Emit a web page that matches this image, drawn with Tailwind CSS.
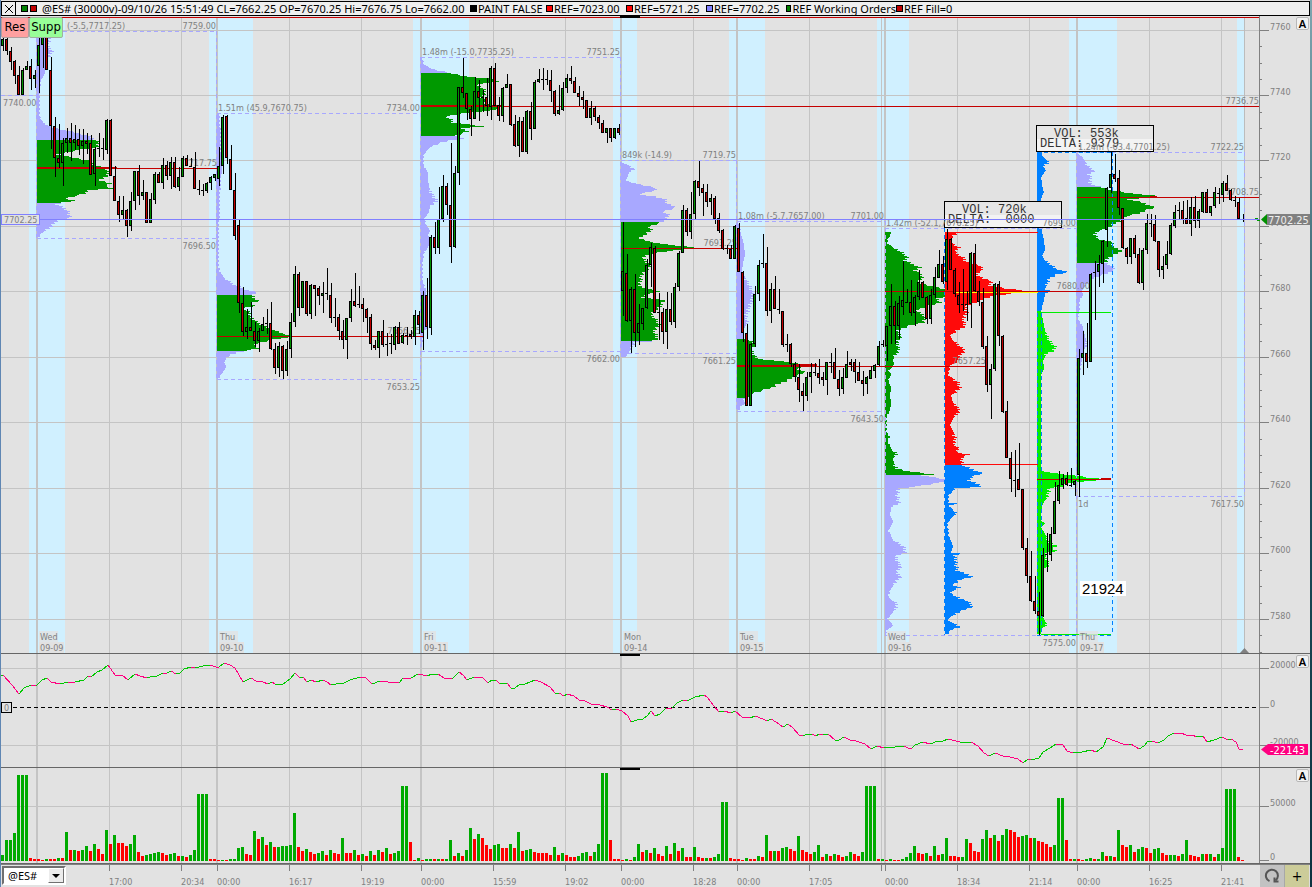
<!DOCTYPE html>
<html lang="en">
<head>
<meta charset="utf-8">
<title>@ES# chart</title>
<script src="https://cdn.jsdelivr.net/npm/@tailwindcss/browser@4"></script>
</head>
<body class="h-screen overflow-hidden bg-[#e2e2e2] font-['DejaVu_Sans_Condensed','Noto_Sans',sans-serif]">
<div class="flex h-full w-full border-l border-[#5f86b3]">
<div class="grid h-full min-w-0 flex-1 grid-rows-[16px_638fr_114fr_96fr_23px]">
  <header class="mt-px flex items-center overflow-hidden whitespace-nowrap border border-black bg-[#efefef] font-['Noto_Sans',sans-serif] text-[11px] leading-3 text-black">
    <button aria-label="Close" class="flex h-full w-[14px] items-center justify-center border-r border-black">
      <svg class="size-2" viewBox="0 0 8 8"><path d="M0 0L8 8M8 0L0 8" stroke="#000" fill="none"/></svg>
    </button>
    <span class="ml-[5px] size-[7px] border border-black bg-[#008000]"></span>
    <span class="ml-[2px] size-[7px] border border-black bg-[#c00000]"></span>
    <span class="ml-[5px] w-[428px]">@ES# (30000v)-09/10/26 15:51:49 CL=7662.25 OP=7670.25 Hi=7676.75 Lo=7662.00</span>
    <span class="flex w-[76px] items-center"><i class="mr-px size-[7px] border border-black bg-black"></i>PAINT FALSE</span>
    <span class="flex w-[80px] items-center"><i class="mr-px size-[7px] border border-black bg-[#f00]"></i>REF=7023.00</span>
    <span class="flex w-[80px] items-center"><i class="mr-px size-[7px] border border-black bg-[#f00]"></i>REF=5721.25</span>
    <span class="flex w-[80px] items-center"><i class="mr-px size-[7px] border border-black bg-[#8080ff]"></i>REF=7702.25</span>
    <span class="flex w-[110px] items-center"><i class="mr-px size-[7px] border border-black bg-[#008000]"></i>REF Working Orders</span>
    <span class="flex items-center"><i class="mr-px size-[7px] border border-black bg-[#c00000]"></i>REF Fill=0</span>
  </header>

  <section class="relative min-h-0 overflow-hidden" aria-label="Price">
    <svg id="price" class="block h-full w-full" viewBox="1 16 1309 638" preserveAspectRatio="xMinYMin meet"></svg>
    <div class="absolute left-0 top-px flex text-[13px] leading-[18px] text-black">
      <button class="h-[21px] w-7 rounded-xs border border-[#b0a0a0] bg-[#ffa0a0] pb-0.5">Res</button>
      <button class="h-[21px] w-[34px] rounded-xs border border-[#a0b0a0] bg-[#98ff98] pb-0.5">Supp</button>
    </div>
    <button class="absolute right-px top-px h-[13px] w-[13px] rounded-xs border border-[#b8b8b8] bg-[#f2f2f2] font-['Noto_Sans',sans-serif] text-[11px] font-semibold leading-[10px]">A</button>
  </section>

  <section class="relative min-h-0 overflow-hidden" aria-label="Delta">
    <svg id="delta" class="block h-full w-full" viewBox="1 654 1309 114" preserveAspectRatio="xMinYMin meet"></svg>
    <button class="absolute right-px top-px h-[13px] w-[13px] rounded-xs border border-[#b8b8b8] bg-[#f2f2f2] font-['Noto_Sans',sans-serif] text-[11px] font-semibold leading-[10px]">A</button>
  </section>

  <section class="relative min-h-0 overflow-hidden" aria-label="Volume">
    <svg id="volume" class="block h-full w-full" viewBox="1 768 1309 96" preserveAspectRatio="xMinYMin meet"></svg>
    <button class="absolute right-px top-px h-[13px] w-[13px] rounded-xs border border-[#b8b8b8] bg-[#f2f2f2] font-['Noto_Sans',sans-serif] text-[11px] font-semibold leading-[10px]">A</button>
  </section>

  <footer class="relative flex min-h-0 border-t border-[#808080]">
    <svg id="times" class="block h-full min-w-0 flex-1" viewBox="1 865 1258 22" preserveAspectRatio="xMinYMin meet"></svg>
    <div class="absolute left-px top-px flex h-[19px] w-16 border-2 border-t-[#707070] border-l-[#707070] border-r-white border-b-white bg-white">
      <label class="sr-only" for="sym">Symbol</label>
      <select id="sym" class="w-full appearance-none bg-white pl-1 font-['Noto_Sans',sans-serif] text-[11px] leading-[15px] text-black outline-none"><option>@ES#</option></select>
      <span class="pointer-events-none absolute right-0 top-0 flex h-full w-4 items-center justify-center border border-t-white border-l-white border-r-[#707070] border-b-[#707070] bg-[#ececec]">
        <svg class="h-1 w-2" viewBox="0 0 8 4"><path d="M0 0H8L4 4Z"/></svg>
      </span>
    </div>
    <button aria-label="Refresh" class="flex w-[25px] items-center justify-center border-r border-[#a8a8a8] bg-[#c2c2c2]">
      <svg class="size-4" viewBox="0 0 16 16" fill="none" stroke="#555" stroke-width="2"><path d="M5.500 13.200A6 6 0 1 1 11.500 12.500"/><path d="M14.500 13.500H10.500V9.500" /></svg>
    </button>
    <button aria-label="Add" class="w-[25px] border-r border-[#ddd] bg-[#cccc99] text-sm leading-5 text-black">+</button>
  </footer>
</div>
<div class="w-[2px] bg-linear-to-b from-[#7fa6b0] via-[#1f4f5c] to-[#0d3340]"></div>
</div>

<script>
const LAV = '#a8a8ff', GRN = '#009900', BLU = '#0080ff', RED = '#ff0a0a', LIM = '#00ee00', DRED = '#c40000', GRID = '#c4c4c4', GRAY = '#808080';
const R = (x, y, w, h, f) => `<rect x="${x}" y="${y}" width="${w}" height="${h}" fill="${f}" shape-rendering="crispEdges"/>`;
const T = (x, y, s, a) => `<text x="${x}" y="${y}" fill="#808080" font-size="9" ${a || ''}>${s}</text>`;
const H = (y, x1, x2, c, d) => `<path d="M${x1} ${y + .5}H${x2}" stroke="${c}" ${d ? 'stroke-dasharray="' + d + '"' : ''} shape-rendering="crispEdges"/>`;
const V = (x, y1, y2, c, d) => `<path d="M${x + .5} ${y1}V${y2}" stroke="${c}" ${d ? 'stroke-dasharray="' + d + '"' : ''} shape-rendering="crispEdges"/>`;

// One entry per bar: high, body top, body bottom, low (pixels); leading g/r/d is up, down or doji.
const candles = `
g36,39,45,51 r36,39,50,55 r47,51,61,70 r60,61,75,84 r66,75,94,95 g68,70,94,95 g61,66,69,70 r59,66,78,90 g70,75,78,88 g38,45,65,93
g36,36,44,68 r36,36,69,70 r57,70,125,149 r117,126,157,177 r124,158,162,168 g138,143,162,186 g128,138,142,153 r123,138,142,161 g125,139,142,150 r129,139,145,155
g129,141,145,164 r133,141,143,154 r135,143,174,175 g147,149,173,186 d133,148,148,157 d138,148,148,160 g119,120,149,154 r119,120,175,176 r166,176,200,201 r196,201,214,222
g196,210,214,219 r209,210,225,237 g192,201,225,231 g171,171,200,210 r165,171,195,205 g180,192,195,200 r192,192,222,223 g193,199,222,223 g172,174,199,204 r172,174,182,183
g158,165,182,189 r161,165,175,180 g157,162,175,189 r157,162,186,188 g167,177,186,191 g156,158,176,177 r155,158,165,166 d158,166,166,167 r152,167,188,189 d180,189,189,195
d184,190,190,196 g182,183,190,193 g176,177,182,190 g174,174,177,181 g147,166,178,186 g115,117,165,174 r115,116,157,164 r145,159,189,190 r173,190,235,240 r220,225,302,313
r287,303,331,336 g309,327,331,339 r302,327,330,331 r322,331,340,347 g328,331,340,352 g317,324,330,331 d309,323,323,334 r302,323,348,350 r343,349,367,374 g342,346,367,377
r345,346,370,379 g341,349,370,376 g313,322,348,358 g266,274,321,327 r272,274,307,316 g281,281,307,308 r281,281,313,316 g284,285,313,319 r285,285,288,316 r286,288,295,305
g282,293,295,313 d268,293,294,300 r283,295,317,323 d298,317,318,327 r314,317,330,340 r320,331,339,349 g318,318,339,359 g289,301,317,322 r273,301,305,307 d286,304,305,308
r298,304,308,322 r308,309,317,333 r314,317,343,350 r340,345,347,350 g331,331,347,358 r320,331,344,347 d333,344,344,356 d334,343,344,354 g326,327,344,350 r322,327,343,344
g333,335,342,344 d327,335,336,345 r330,334,336,339 g310,315,336,345 r311,315,324,334 g291,295,332,350 r278,295,326,339 g235,237,327,335 r222,237,247,254 g187,219,247,254
g175,186,218,222 r183,186,204,215 r143,205,246,263 g166,173,246,248 g87,87,172,185 r58,87,92,98 r93,93,108,120 r106,109,118,136 g77,91,118,119 r80,91,97,121
d90,97,98,112 r78,97,105,116 g66,68,106,120 r63,68,105,106 r97,105,115,121 g87,88,115,122 g74,84,87,88 r84,84,124,126 r115,124,145,147 g117,121,145,157
r117,121,151,152 g110,111,151,154 r102,111,128,140 g80,82,128,129 g69,79,81,83 d68,79,80,90 d70,79,80,85 r70,80,90,102 r90,91,113,116 g85,110,113,115
g82,88,109,111 g74,78,87,93 r66,78,80,84 r77,81,92,93 r86,93,96,106 r91,97,99,109 r100,100,117,118 g101,108,117,125 r106,108,116,121 r115,117,122,129
r120,123,132,133 g128,128,132,143 r128,128,137,142 g128,128,137,139 r124,128,132,135 g222,271,290,316 r254,273,320,322 g287,289,320,353 r274,289,332,347 g304,323,332,345
g308,308,323,330 g259,265,307,309 g243,247,264,287 r246,248,312,313 d293,312,313,340 r308,312,331,344 g292,309,331,349 r293,309,321,325 g283,287,321,328 g251,253,286,291
g205,210,252,253 r208,210,231,236 g192,214,231,239 g180,181,213,219 r161,181,187,196 r184,188,192,216 r184,192,201,207 g194,198,201,215 r196,198,218,224 r213,218,230,233
r229,230,248,250 d245,248,249,254 r245,249,258,259 g225,226,258,259 r223,228,271,272 r271,272,332,342 r324,333,405,406 g343,344,405,406 g286,294,343,347 g260,265,293,301
d234,263,264,268 r247,263,310,316 g283,289,310,323 r276,289,308,309 d289,309,310,314 r311,311,344,347 d334,344,345,352 r343,344,363,367 r362,364,376,382 r364,377,389,402
r383,391,395,411 g372,377,395,401 g363,372,376,393 d363,372,374,376 r359,373,377,384 r372,377,379,386 g362,362,379,395 d353,362,363,373 r348,362,378,379 r370,379,388,396
g368,377,388,394 g351,364,377,378 r359,362,364,371 r359,362,371,383 r362,372,380,381 r371,380,383,396 g376,377,383,394 g366,370,378,379 g364,365,370,378 g341,346,364,366
d340,344,345,347 g326,326,345,361 g284,306,325,344 r301,306,325,344 g296,303,325,339 g261,300,306,315 d289,302,303,303 r280,302,312,316 g295,297,312,326 g270,282,296,300
r281,282,297,298 r296,297,318,324 g289,295,318,324 g267,277,294,298 g250,264,277,278 r256,264,281,284 g229,239,281,290 r238,239,269,270 r268,270,293,297 r282,295,304,313
d269,304,305,311 d291,304,305,321 g252,253,303,328 r244,253,290,292 r281,291,301,306 r288,302,346,349 r336,346,384,392 g364,369,384,419 g283,284,368,371 r281,284,335,346
r335,336,411,413 r401,411,457,458 r452,458,478,492 d450,480,481,497 r443,479,489,490 r489,489,547,550 r538,548,575,583 r551,576,600,602 r576,601,610,614 r592,611,615,635
g548,555,615,617 d533,554,555,572 g527,534,554,561 g482,501,533,534 g471,485,500,504 g474,478,484,489 r472,478,484,486 d468,485,487,487 g480,481,484,496 g349,358,474,497
g331,353,357,375 r323,353,361,368 g273,274,361,362 d261,272,273,320 g255,264,271,287 g240,241,263,283 g187,188,229,247 g151,174,187,193 r154,174,178,182 r170,178,207,215
r208,208,247,249 r247,248,256,264 g238,238,256,264 r235,238,253,258 r248,254,282,284 g248,250,282,290 g214,223,249,254 d214,223,224,237 r215,224,240,242 r241,241,269,277
g256,266,269,279 g241,254,264,269 g223,225,253,255 g205,212,225,228 d202,210,211,220 r201,210,219,224 r200,218,223,224 g197,207,223,236 r196,207,220,228 g209,211,220,228
g192,192,211,213 r189,192,212,213 g206,206,212,216 g187,192,205,208 d188,193,194,204 g181,183,194,202 r175,183,190,191 r189,190,199,201 d196,200,201,207 r198,202,218,219
d214,219,220,222`.trim().split(/\s+/);

const volume = `
g6 g21 g21 g28 g86 g86 g86 r3 r2 r2 r1 g2 r2 r2 g3 r3 g29 r11 g11 r10 g11 g15 r10 g17 r12 r7 g31 r17 g26 r18
r18 r15 g17 g26 r9 r5 g6 g7 g8 g9 r8 r6 g7 g8 r5 g5 r4 g6 g11 g67 g67 g67 r2 r2 r1 g1 r1 g2 g2 g13
g14 r7 r6 g30 r22 g24 r16 g19 r14 g14 g15 g15 g16 g48 r14 r10 g12 r9 r7 g8 g10 r6 g11 r8 r7 g23 r8 r8 g11 r6
g7 r5 g10 r6 g11 r9 g13 r7 g8 g10 g75 g75 r19 r1 g3 r1 g2 g2 r2 g2 r2 g2 g21 r5 g8 r5 g11 g33 r22 g27
r23 r16 r12 g16 g17 r13 r13 g17 r13 g29 r10 g11 g12 r9 r8 r8 r8 r6 g14 r6 g8 r6 r4 r4 g5 g8 g9 r5 g9 g17
g88 g88 r21 r2 r2 r1 g2 r1 g4 g17 r9 g11 r8 g13 r7 r5 g15 r7 g18 r10 g13 r4 r4 g14 r4 r3 g3 r3 g4 g7
g59 g59 r3 r2 r2 r1 g3 r2 r2 g5 r4 g26 r10 g10 r10 g13 g14 r12 r10 g25 r11 r9 r7 g9 g16 r4 g7 r5 g7 r6
r4 g5 g9 r7 r5 g9 g75 g75 g75 r2 g2 r1 g2 r1 r1 g2 g4 g8 g15 r8 r7 g8 r5 g15 r6 g7 g23 r5 r5 r4
g4 g22 r18 r10 r9 g22 g31 r23 g26 r20 g26 g32 r31 r29 r24 g25 g26 r23 g23 r20 r19 r17 r14 g16 g63 g63 r21 r2 g2 r2
r1 g2 g3 r2 g2 g9 r5 g5 r4 g31 r16 r14 g16 r9 g12 g14 r13 r8 g12 g13 r8 r6 g6 g6 r5 g7 g21 r6 r5 r4
g7 r7 g7 r4 g7 g13 g72 g72 g72 r4 r1`.trim().split(/\s+/);

// Volume profiles: base x, colour bands [until y, colour], then y:width breakpoints.
const profiles = [
  [37, [[140, LAV], [203, GRN], [999, LAV]], '38:13 45:10 50:15 55:13 60:8 65:8 72:8 80:4 93:3 115:3 122:6 127:15 131:34 135:50 139:58 142:62 147:60 150:38 154:20 157:35 160:52 165:58 168:70 175:71 180:62 183:74 186:68 188:76 190:50 193:48 198:28 200:38 202:25 204:20 208:28 212:32 217:33 220:20 228:12 233:4 237:3'],
  [217, [[295, LAV], [351, GRN], [999, LAV]], '114:3 165:5 172:5 178:4 200:3 236:2 265:2 271:3 277:7 283:15 289:28 292:40 295:35 298:37 300:42 303:33 305:38 308:25 312:33 316:33 320:38 325:45 330:58 333:65 336:80 339:55 343:40 346:37 348:42 350:30 352:20 356:10 362:7 366:9 370:7 375:4 379:1'],
  [421, [[73, LAV], [136, GRN], [999, LAV]], '58:2 64:3 69:12 72:28 73:30 76:45 78:68 81:77 84:55 88:62 92:65 97:60 100:68 103:62 106:82 110:70 113:40 116:25 119:30 122:32 126:62 128:40 131:47 135:35 138:43 140:28 143:18 146:10 150:6 155:3 165:3 172:7 180:7 186:8 192:10 198:14 201:16 205:9 212:8 217:4 224:5 230:9 234:7 241:9 247:7 253:3 265:2 280:2 289:5 320:6 328:6 331:3 340:2 347:1'],
  [621, [[222, LAV], [341, GRN], [999, LAV]], '162:2 168:13 172:8 180:5 184:18 187:34 190:34 194:17 196:34 199:44 203:46 207:55 211:42 215:48 220:44 222:40 226:28 230:30 234:24 238:18 241:28 244:45 247:75 249:60 252:38 255:25 258:22 261:25 265:30 270:25 275:20 280:20 285:18 288:25 291:38 294:25 297:22 300:45 303:40 306:40 310:33 314:30 320:36 325:38 330:33 335:35 338:37 341:30 342:14 348:10 353:7 357:4'],
  [737, [[339, LAV], [398, GRN], [999, LAV]], '222:2 236:5 245:7 255:8 262:6 270:5 281:10 288:14 293:16 300:15 307:12 315:9 322:10 330:6 338:6 340:12 344:20 348:14 352:15 358:20 361:45 365:75 368:60 372:68 375:60 380:50 384:40 387:35 390:25 393:15 397:10 399:6 403:8 406:4 410:2'],
  [885, [[475, GRN], [999, LAV]], '232:6 235:5 239:3 243:3 247:8 250:14 253:18 256:22 260:20 263:26 267:35 270:30 274:36 278:37 282:32 286:48 289:60 291:82 296:60 298:52 302:55 306:42 310:30 314:38 318:40 322:38 325:25 330:12 336:16 342:12 350:14 356:9 360:8 364:9 370:4 374:6 380:4 388:6 395:5 403:6 410:5 416:2 425:2 432:2 436:5 440:3 450:7 454:12 458:8 463:9 468:11 471:25 474:48 475:38 478:55 480:67 482:52 484:45 486:30 488:14 495:12 503:14 507:6 515:5 521:8 530:4 540:8 546:19 552:20 556:10 562:13 566:16 572:11 576:16 582:10 590:5 597:4 604:12 610:9 618:3 625:8 630:2 634:1'],
  [945, [[465, RED], [999, BLU]], '232:13 236:8 242:6 247:14 252:10 257:18 262:22 265:35 270:38 273:30 278:38 280:46 285:45 288:60 290:79 293:67 296:45 300:35 306:20 312:22 318:18 326:20 330:12 335:5 340:8 345:14 350:20 355:15 360:14 365:5 375:4 382:13 388:15 395:6 402:8 410:15 418:8 425:5 430:8 437:10 445:9 448:14 452:11 454:24 457:17 464:17 466:20 470:30 473:38 476:27 480:24 485:36 486:36 488:10 495:4 502:4 503:13 505:4 513:11 518:6 523:3 535:4 546:8 552:6 553:16 555:10 563:11 570:12 576:28 579:16 584:8 587:14 592:5 598:14 600:22 606:28 611:15 616:6 620:3 626:15 630:5 634:3'],
  [1037, [[311, BLU], [999, LIM]], '153:4 156:6 160:10 163:11 166:6 170:9 176:4 182:4 192:7 196:4 205:4 228:4 240:7 250:8 255:5 260:8 265:15 268:18 270:25 272:30 274:20 278:12 284:10 288:8 291:15 293:8 300:7 308:4 311:4 320:6 330:8 340:12 346:18 350:17 353:10 360:6 368:7 375:4 440:4 470:4 471:7 473:20 475:38 477:50 479:72 481:45 483:30 486:24 488:12 495:11 503:6 510:4 520:4 523:8 527:4 535:9 542:12 545:20 548:15 550:20 553:8 560:10 565:12 570:4 608:6 612:4 625:10 628:4 634:4'],
  [1077, [[187, LAV], [263, GRN], [999, LAV]], '154:3 160:8 165:10 170:17 174:12 178:14 182:12 185:18 187:25 190:35 193:55 195:78 197:70 199:52 202:65 207:78 210:68 213:62 216:48 219:45 223:38 228:30 231:20 234:18 238:20 242:36 246:35 250:45 253:40 257:32 262:28 266:35 269:38 273:30 277:18 280:12 290:5 295:6 300:3 310:3 318:1 324:5 335:8 345:10 350:6 360:5 368:4 375:1']
];

const thick = [36, 216, 420, 620, 736, 884, 1076];
const thin = [109, 181, 289, 361, 493, 565, 693, 809, 881, 957, 1029, 1149, 1221];
const grid = (y1, y2) => thin.map(x => V(x, y1, y2, GRID)).join('') + thick.map(x => R(x, y1, 2, y2 - y1, GRID)).join('');
const axis = (y1, y2) => V(1259, y1, y2, GRAY);
const END = 'text-anchor="end"';

function price() {
  let s = [[29, 36], [209, 44], [413, 56], [613, 24], [729, 36], [877, 32], [1069, 48], [1237, 8]].map(a => R(a[0], 18, a[1], 635, '#d0f0ff')).join('');
  s += [30, 95, 160, 226, 291, 357, 422, 488, 553, 619].map((y, i) => H(y, 1, 1259, GRID) + H(y, 1259, 1269, GRAY) + T(1270, y, 7760 - 20 * i)).join('');
  s += grid(18, 653) + V(1244, 18, 653, '#bcbcbc');
  for (let i = 0; i < 39; i++) if (i % 4) s += H(Math.round(30 + i * 16.36), 1259, 1262, GRAY);
  s += axis(16, 653) + H(653, 1, 1310, '#666');
  for (const [x, bands, pts] of profiles) {
    const p = pts.split(' ').map(q => q.split(':').map(Number));
    for (let i = 0; i < p.length - 1; i++) {
      for (let y = p[i][0]; y < p[i + 1][0]; y++) {
        const w0 = p[i][1] + (p[i + 1][1] - p[i][1]) * (y - p[i][0]) / (p[i + 1][0] - p[i][0]);
        const j = w0 > 9 ? ((y * 7 + x) % 5) - 2 : (w0 < 5 && x !== 1037 && y % 4 > 1 ? -1 : 0);
        s += R(x, y, Math.max(1, Math.round(w0 + j)), 1, bands.find(b => y < b[0])[1]);
      }
    }
  }
  const D = '4 3';
  s += [[31, 63, 217], [238, 37, 217], [95, 1, 37], [113, 217, 421], [379, 217, 421], [57, 421, 620], [351, 421, 620], [160, 621, 737], [353, 621, 737], [221, 737, 885], [411, 737, 882], [228, 885, 1077], [635, 885, 1039], [152, 1077, 1244], [496, 1077, 1244]].map(a => H(a[0], a[1], a[2], LAV, D)).join('');
  s += [[36, 31, 238], [216, 31, 379], [420, 57, 379], [620, 57, 353], [736, 160, 411], [885, 221, 635], [1076, 152, 635], [1244, 152, 496]].map(a => V(a[0], a[1], a[2], LAV, D)).join('');
  s += V(944, 228, 635, BLU, D) + V(1037, 152, 635, BLU, D) + V(1041, 152, 635, BLU, D) + V(1112, 152, 635, BLU, D) + H(152, 1037, 1112, BLU, D) + H(635, 1037, 1112, BLU, D);
  // value and reference lines
  s += [[17, 1, 1259], [106, 421, 1259], [168, 37, 217], [336, 217, 423], [248, 621, 737], [366, 737, 985], [291, 885, 1090], [197, 1077, 1259], [479, 1037, 1111]].map(a => H(a[0], a[1], a[2], DRED)).join('');
  s += R(37, 167, 80, 1, DRED) + R(421, 105, 80, 1, DRED) + R(737, 365, 80, 1, DRED) + R(794, 364, 23, 1, DRED) + R(1101, 478, 10, 1, DRED) + R(1150, 196, 7, 1, DRED);
  s += R(945, 232, 93, 1, RED) + R(945, 464, 93, 1, RED) + R(956, 292, 82, 1, '#ffff00') + R(1040, 312, 71, 1, LIM) + R(1041, 634, 70, 1, LIM);
  s += [[216, 29, '7759.00'], [217, 166, '7717.75'], [216, 249, '7696.50'], [420, 111, '7734.00'], [620, 55, '7751.25'], [421, 334, '7666.25'], [420, 390, '7653.25'], [620, 362, '7662.00'], [736, 158, '7719.75'], [737, 246, '7693.25'], [736, 364, '7661.25'], [884, 219, '7701.00'], [884, 422, '7643.50'], [986, 364, '7657.25'], [1090, 289, '7680.00'], [1259, 104, '7736.75'], [1259, 195, '7708.75'], [1244, 150, '7722.25'], [1244, 507, '7617.50'], [1076, 646, '7575.00']].map(a => T(a[0], a[1], a[2], END)).join('');
  s += T(67, 29, '(-5.5,7717.25)') + T(3, 106, '7740.00') + T(218, 111, '1.51m (45.9,7670.75)') + T(422, 55, '1.48m (-15.0,7735.25)') + T(622, 158, '849k (-14.9)') + T(738, 219, '1.08m (-5.7,7657.00)') + T(1078, 507, '1d');
  s += [[38, 'Wed', '09-09'], [218, 'Thu', '09-10'], [422, 'Fri', '09-11'], [622, 'Mon', '09-14'], [738, 'Tue', '09-15'], [886, 'Wed', '09-16'], [1078, 'Thu', '09-17']].map(a => R(a[0] + 1, 631, a[1] === 'Fri' ? 13 : 19, 11, '#e2e2e2cc') + R(a[0] + 1, 642, 25, 11, '#e2e2e2') + T(a[0] + 2, 640, a[1]) + T(a[0] + 2, 651, a[2])).join('');
  candles.forEach((c, k) => {
    const [h, t, b, l] = c.slice(1).split(',').map(Number), x = 4 * k + 1;
    s += R(x + 2, h, 1, Math.max(1, l - h), '#000');
    if (c[0] === 'd') s += R(x, t, 3, 1, '#000');
    else s += R(x, t, 3, b - t + 1, '#000') + R(x + 1, t + 1, 1, Math.max(0, b - t - 1), c[0] === 'g' ? '#009000' : '#c00000');
  });
  // info boxes
  const box = (x, y, a, b) => R(x, y, 118, 27, '#000') + R(x + 1, y + 1, 116, 25, '#e6e6e6') + R(x + 1, y + 14, 116, 12, '#f3f3f3') + `<g font-family="Liberation Mono, monospace" font-size="12" fill="#333"><text x="${x + 18}" y="${y + 12}">${a}</text><text x="${x + 4}" y="${y + 22}">${b}</text></g>`;
  s += box(1036, 125, 'VOL: 553k', 'DELTA: 9379') + box(944, 201, 'VOL: 720k', 'DELTA:&#160; 0000');
  s += T(886, 226, '1.42m (-52.1,7678.25)') + T(1078, 150, '1.24m (-63.4,7701.25)') + T(1076, 226, '7699.00', END);
  s += H(219, 1, 1259, '#8080ff');
  s += `<rect x="1.5" y="214.500" width="38" height="10" fill="#e2e2e2" stroke="#8080ff"/>` + T(4, 223, '7702.25');
  s += R(1080, 581, 46, 15, '#fff') + '<text x="1082" y="594" font-family="Liberation Sans" font-size="15">21924</text>';
  s += '<path d="M1240 653L1244.500 648L1249 653Z" fill="#808080"/>' + R(620, 16, 20, 2, '#000');
  s += `<path d="M1261 219.500L1267 214V225Z" fill="#009000"/>` + R(1255, 218, 3, 1, GRN) + R(1257, 220, 3, 1, GRN) + R(1267, 214, 43, 11, '#808080') + '<text x="1268" y="224" font-size="11" fill="#eee">7702.25</text>';
  return s;
}

const deltaPts = '1,676 3,675 12,685 19,694 24,688 31,685 36,686 42,680 47,678 51,682 60,684 68,682 75,682 84,680 88,676 91,677 97,672 102,670 108,665 115,675 122,675 128,680 135,674 140,676 147,678 150,677 157,676 163,673 167,673 171,671 176,674 180,673 184,669 191,667 195,668 203,666 210,665 216,667 219,667 224,663 230,665 235,668 243,682 251,678 256,681 263,682 268,684 272,682 275,684 283,684 290,679 295,673 300,678 303,677 307,682 311,680 316,682 323,680 327,682 331,685 336,684 344,683 350,680 360,677 366,678 372,684 380,681 388,682 399,683 403,678 411,678 418,674 423,675 427,676 432,674 438,674 444,678 452,679 459,672 463,675 467,680 474,677 482,677 488,683 492,680 496,680 500,684 507,683 511,688 515,688 519,685 525,684 530,682 535,680 541,682 550,687 555,693 559,693 564,696 567,694 574,696 579,700 585,701 591,704 600,705 607,707 612,710 616,709 622,711 628,716 631,722 637,720 643,719 648,715 651,711 655,716 660,714 666,708 672,708 677,703 683,700 687,701 695,697 704,695 707,697 714,706 719,712 724,711 731,713 735,711 742,717 750,718 755,716 763,719 767,721 771,719 776,722 783,727 788,724 793,728 799,735 803,736 807,734 812,734 816,736 819,734 823,735 828,734 835,740 839,740 844,737 850,740 856,741 865,744 871,749 877,746 884,748 895,747 904,746 908,748 912,748 915,745 923,742 930,744 938,741 943,741 948,739 956,741 960,742 971,742 978,746 984,753 989,756 995,753 1003,756 1010,757 1018,759 1023,763 1028,759 1031,760 1039,758 1043,752 1050,748 1056,744 1063,745 1067,751 1073,753 1082,752 1091,750 1096,752 1103,747 1107,738 1115,741 1123,744 1129,745 1131,744 1139,749 1144,746 1148,741 1152,741 1158,743 1164,740 1168,736 1174,733 1181,733 1186,735 1193,735 1196,737 1203,736 1207,742 1214,740 1222,737 1228,740 1231,739 1236,742 1239,749 1243,749';

function delta() {
  let s = H(668, 1, 1259, GRID) + H(745, 1, 1259, GRID) + grid(654, 767) + axis(654, 767);
  s += H(707, 13, 1258, '#000', '4 3');
  s += [[668, '20000'], [707, '0'], [745, '-20000']].map(a => H(a[0], 1259, 1269, GRAY) + T(1270, a[0], a[1])).join('');
  const p = deltaPts.split(' ').map(q => q.split(',').map(Number));
  for (let i = 1; i < p.length; i++) {
    const up = p[i][1] < p[i - 1][1] || (p[i][1] === p[i - 1][1] && i % 2);
    s += `<path d="M${p[i - 1].join(' ')}L${p[i].join(' ')}" stroke="${up ? '#00c800' : '#ff0080'}" shape-rendering="crispEdges"/>`;
  }
  s += '<rect x="1.500" y="702.500" width="10" height="10" fill="#e2e2e2" stroke="#000"/>' + T(4, 711, '0');
  s += R(620, 654, 20, 2, '#000') + H(767, 1, 1310, '#666');
  s += '<path d="M1261 749.500L1268 744H1308V755H1268Z" fill="#ff0080"/><text x="1270" y="754" font-size="11" fill="#fff">-22143</text>';
  return s;
}

function vol() {
  let s = H(806, 1, 1259, GRID) + grid(768, 863) + axis(768, 863);
  s += H(806, 1259, 1269, GRAY) + T(1270, 806, '50000') + H(860, 1259, 1269, GRAY) + T(1270, 860, '0');
  s += R(620, 768, 20, 2, '#000');
  volume.forEach((v, k) => { const h = +v.slice(1); s += R(4 * k + 1, 861 - h, 3, h, v[0] === 'g' ? '#00aa00' : '#ff0000'); });
  return s + H(863, 1, 1310, '#666');
}

function times() {
  return [[109, '17:00'], [181, '20:34'], [217, '00:00'], [289, '16:17'], [361, '19:19'], [421, '00:00'], [493, '15:59'], [565, '19:02'], [621, '00:00'], [693, '18:28'], [737, '00:00'], [809, '17:05'], [881, ''], [885, '00:00'], [957, '18:34'], [1029, '21:14'], [1077, '00:00'], [1149, '16:25'], [1221, '21:41']]
    .map(a => V(a[0], 865, 871, GRAY) + T(a[0], 885, a[1])).join('');
}

document.getElementById('price').innerHTML = price();
document.getElementById('delta').innerHTML = delta();
document.getElementById('volume').innerHTML = vol();
document.getElementById('times').innerHTML = times();
</script>
</body>
</html>
